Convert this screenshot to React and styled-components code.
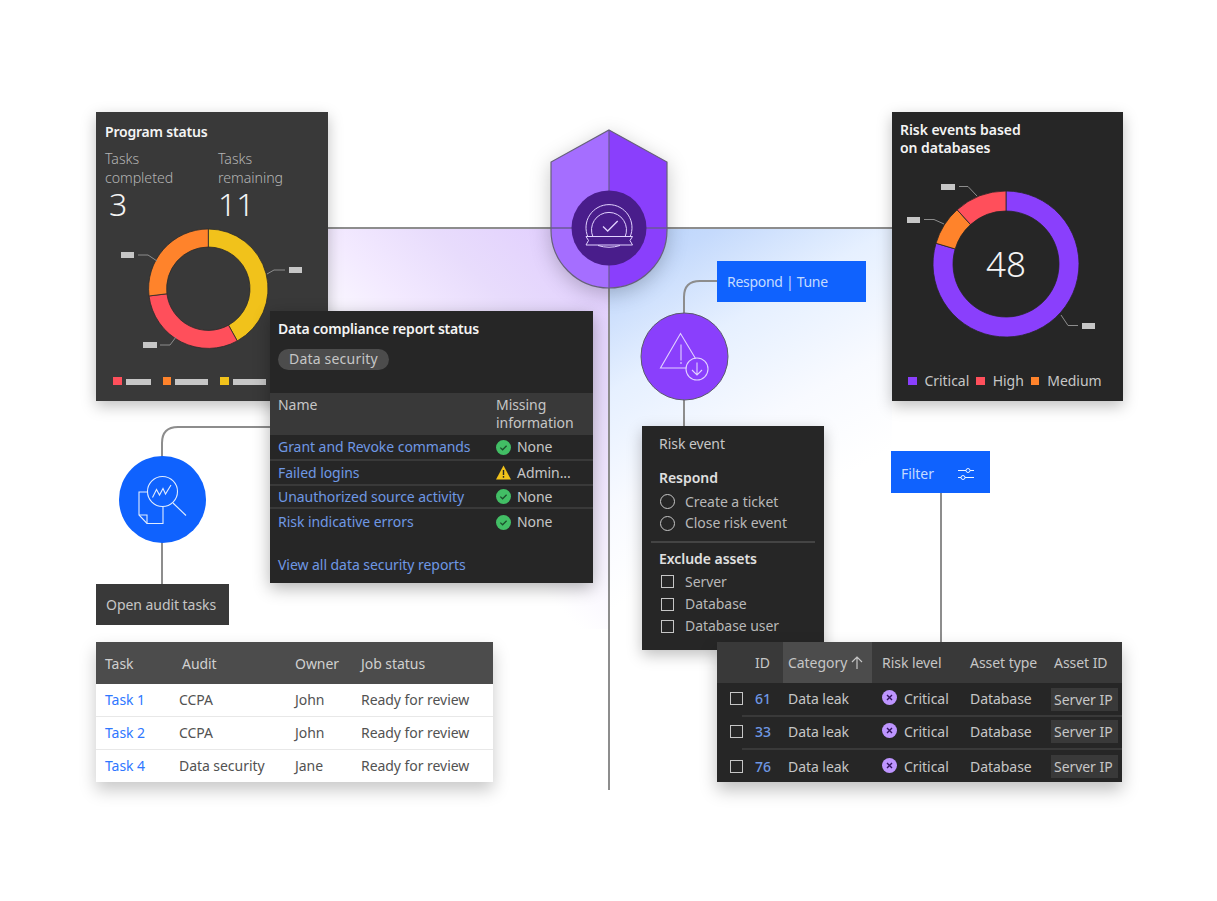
import React from 'react';
import styled, { createGlobalStyle } from 'styled-components';

const GlobalStyle = createGlobalStyle`
	html, body {
		margin: 0;
		padding: 0;
		background: #fff;
	}
	body {
		font-family: "Noto Sans", "Open Sans", sans-serif;
		font-size: 14px;
		line-height: 18px;
		letter-spacing: -0.05px;
		color: #c6c6c6;
	}
	* {
		box-sizing: border-box;
	}
`

const polar = (cx, cy, r, deg) => {
	const a = (deg - 90) * Math.PI / 180
	return [cx + r * Math.cos(a), cy + r * Math.sin(a)]
}

const arcPath = (cx, cy, r1, r2, from, to) => {
	const [ax, ay] = polar(cx, cy, r2, from)
	const [bx, by] = polar(cx, cy, r2, to)
	const [c, d] = polar(cx, cy, r1, to)
	const [e, f] = polar(cx, cy, r1, from)
	const big = to - from > 180 ? 1 : 0
	return `M${ax} ${ay}A${r2} ${r2} 0 ${big} 1 ${bx} ${by}L${c} ${d}A${r1} ${r1} 0 ${big} 0 ${e} ${f}Z`
}

const Donut = ({ cx, cy, r1, r2, segments, gap }) => (
	<g>
		{segments.map((s) => (
			<path key={s.from} d={arcPath(cx, cy, r1, r2, s.from, s.to)} fill={s.color} stroke={gap} strokeWidth="0.8" />
		))}
	</g>
)

const Callout = ({ x, y, w, line }) => (
	<g>
		<rect x={x} y={y} width={w} height="6" fill="#c6c6c6" />
		<path d={line} fill="none" stroke="#8d8d8d" strokeWidth="1" />
	</g>
)

const programSegments = [
	{ from: 0, to: 151, color: '#f1c21b' },
	{ from: 151, to: 263, color: '#ff4f5b' },
	{ from: 263, to: 360, color: '#ff832b' },
]

const riskSegments = [
	{ from: 0, to: 286.5, color: '#8a3ffc' },
	{ from: 286.5, to: 318, color: '#ff832b' },
	{ from: 318, to: 360, color: '#ff4f5b' },
]

const CheckIcon = () => (
	<svg width="15" height="15" viewBox="0 0 15 15">
		<circle cx="7.5" cy="7.5" r="7.5" fill="#42be65" />
		<path d="M4.3 7.6l2.3 2.2 4-4" fill="none" stroke="#1c4f2c" strokeWidth="1.3" />
	</svg>
)

const WarnIcon = () => (
	<svg width="15" height="15" viewBox="0 0 15 15">
		<path d="M7.5 .5L15 14.5H0Z" fill="#f1c21b" />
		<path d="M7.5 5v5M7.5 11v1.8" fill="none" stroke="#262626" strokeWidth="1.4" />
	</svg>
)

const CriticalIcon = () => (
	<svg width="15" height="15" viewBox="0 0 15 15">
		<circle cx="7.5" cy="7.5" r="7.5" fill="#be95ff" />
		<path d="M5 5l5 5M10 5l-5 5" fill="none" stroke="#31135e" strokeWidth="1.4" />
	</svg>
)

const SortArrow = () => (
	<svg width="12" height="13" viewBox="0 0 12 13">
		<path d="M6 13V1M1 6l5-5 5 5" fill="none" stroke="#c6c6c6" strokeWidth="1.2" />
	</svg>
)

const complianceRows = [
	{ name: 'Grant and Revoke commands', icon: <CheckIcon />, value: 'None', h: 26 },
	{ name: 'Failed logins', icon: <WarnIcon />, value: 'Admin...', h: 25 },
	{ name: 'Unauthorized source activity', icon: <CheckIcon />, value: 'None', h: 23 },
	{ name: 'Risk indicative errors', icon: <CheckIcon />, value: 'None', h: 26, last: true },
]

const tasks = [
	{ task: 'Task 1', audit: 'CCPA', owner: 'John' },
	{ task: 'Task 2', audit: 'CCPA', owner: 'John' },
	{ task: 'Task 4', audit: 'Data security', owner: 'Jane' },
]

const risks = [
	{ id: 61, top: 0, bottom: 1, sep: true },
	{ id: 33, top: 0, bottom: 2, sep: true },
	{ id: 76, top: 2, bottom: 0 },
]

const App = () => {
	return (
		<Canvas>
			<GlobalStyle />
			<PurpleGlow />
			<BlueGlow />

			<Wires viewBox="0 0 1217 901">
				<path d="M328 228H892M609 130V790" />
				<path d="M270 427H178Q162 427 162 443V584" />
				<path d="M717 281H700Q684 281 684 297V427" />
				<path d="M941 492V642" />
			</Wires>

			<Shield viewBox="550 129 118 161">
				<path d="M609 130L551 162V230A58 58 0 0 0 609 288Z" fill="#a56eff" />
				<path d="M609 130L667 162V230A58 58 0 0 1 609 288Z" fill="#8a3ffc" />
				<path d="M609 130V288M551 228H667" stroke="#6a5a96" strokeWidth="1.3" />
				<path d="M609 130L667 162V230A58 58 0 0 1 551 230V162Z" fill="none" stroke="#66607a" strokeWidth="1.2" />
				<circle cx="609" cy="228" r="37.5" fill="#491d8b" />
				<g fill="none" stroke="#e2d2ff" strokeWidth="1">
					<path d="M588 237A23 23 0 1 1 630 237" />
					<path d="M593 237A17.5 17.5 0 1 1 625 237" />
					<path d="M603 226.5l4.700 4.500 10-10" strokeWidth="1.3" />
					<path d="M586 236.500H632.500L630 240.500L632.500 245H586L588.500 240.500Z" />
					<path d="M598 245.500Q609 249 620 245.500" />
				</g>
			</Shield>

			<ProgramCard>
				<CardTitle $tight>Program status</CardTitle>
				<Stats>
					<Stat>
						<StatLabel>Tasks<br />completed</StatLabel>
						<StatValue $indent={4}>3</StatValue>
					</Stat>
					<Stat>
						<StatLabel>Tasks<br />remaining</StatLabel>
						<StatValue>11</StatValue>
					</Stat>
				</Stats>
				<ProgramChart viewBox="96 225 232 130">
					<Donut cx={208.3} cy={288.7} r1={41.7} r2={59.7} segments={programSegments} gap="#2b2b2b" />
					<Callout x={121} y={252} w={13} line="M138 255H148L157 261" />
					<Callout x={289} y={267} w={13} line="M285 270H274L267 274" />
					<Callout x={143} y={342} w={14} line="M160 345H170L176 337" />
				</ProgramChart>
				<ProgramLegend>
					<Swatch $color="#ff4f5b" />
					<LegendBar $width={25} />
					<Swatch $color="#ff832b" />
					<LegendBar $width={33} />
					<Swatch $color="#f1c21b" />
					<LegendBar $width={33} />
				</ProgramLegend>
			</ProgramCard>

			<ComplianceCard>
				<ComplianceHead>
					<CardTitle $tight>Data compliance report status</CardTitle>
					<Chip>Data security</Chip>
				</ComplianceHead>
				<ComplianceHeader>
					<span>Name</span>
					<span>Missing<br />information</span>
				</ComplianceHeader>
				{complianceRows.map((r) => (
					<ComplianceRow key={r.name} $h={r.h} $last={r.last}>
						<Link>{r.name}</Link>
						<StatusCell>{r.icon}{r.value}</StatusCell>
					</ComplianceRow>
				))}
				<ViewAll>View all data security reports</ViewAll>
			</ComplianceCard>

			<AuditNode>
				<svg width="87" height="87" viewBox="119 456 87 87">
					<circle cx="162.5" cy="499.5" r="43.5" fill="#0f62fe" />
					<g fill="none" stroke="#e0ecff" strokeWidth="1.1">
						<path d="M147 492H139V515L147 523.500H163V507" />
						<path d="M139 515H147V523.500" />
						<circle cx="162.500" cy="491.500" r="15" />
						<path d="M173 503L186 515.500" />
						<path d="M152.500 497.500L156.500 489.500L159.500 495L163 488.500L165.500 494L171 485" />
					</g>
				</svg>
			</AuditNode>

			<AuditTag>Open audit tasks</AuditTag>

			<TaskTable>
				<TaskHeader>
					<span>Task</span>
					<HeaderAudit>Audit</HeaderAudit>
					<span>Owner</span>
					<span>Job status</span>
				</TaskHeader>
				{tasks.map((t, i) => (
					<TaskRow key={t.task} $last={i === tasks.length - 1}>
						<TaskLink>{t.task}</TaskLink>
						<span>{t.audit}</span>
						<span>{t.owner}</span>
						<span>Ready for review</span>
					</TaskRow>
				))}
			</TaskTable>

			<RespondTag>Respond | Tune</RespondTag>

			<RiskNode>
				<svg width="89" height="89" viewBox="639.500 311.500 89 89">
					<circle cx="684" cy="356" r="43.500" fill="#8a3ffc" stroke="#5a5a6a" strokeWidth="1" />
					<g fill="none" stroke="#e2d2ff" strokeWidth="1.1">
						<path d="M686 367.500H660L680 333L695 358" />
						<path d="M680.500 344V360M680.500 361.500V363.500" />
						<circle cx="696.500" cy="368.500" r="11" />
						<path d="M696.500 362V374.500M691.500 369.500L696.500 374.500L701.500 369.500" />
					</g>
				</svg>
			</RiskNode>

			<RiskCard>
				<CardTitle>Risk events based<br />on databases</CardTitle>
				<RiskChart viewBox="892 180 231 165">
					<Donut cx={1006} cy={264} r1={53} r2={73} segments={riskSegments} gap="#262626" />
					<Callout x={941} y={184} w={14} line="M959 186.500H968L977 196" />
					<Callout x={907} y={217} w={13} line="M924 219.500H934L944 224" />
					<Callout x={1082} y={323} w={13} line="M1078 325.500H1068L1061 315" />
					<ChartNumber x="1006" y="277" textAnchor="middle">48</ChartNumber>
				</RiskChart>
				<RiskLegend>
					<LegendItem><Swatch $color="#8a3ffc" />Critical</LegendItem>
					<LegendItem><Swatch $color="#ff4f5b" />High</LegendItem>
					<LegendItem><Swatch $color="#ff832b" />Medium</LegendItem>
				</RiskLegend>
			</RiskCard>

			<FilterTag>
				Filter
				<svg width="16" height="14" viewBox="0 0 16 14">
					<g fill="none" stroke="#edf5ff" strokeWidth="1">
						<path d="M0 3.500H8M12 3.500H16M0 10.500H3M7 10.500H16" />
						<circle cx="10" cy="3.500" r="2" />
						<circle cx="5" cy="10.500" r="2" />
					</g>
				</svg>
			</FilterTag>

			<RiskPanel>
				<PanelLine>Risk event</PanelLine>
				<PanelHeading>Respond</PanelHeading>
				<OptionRow><Radio />Create a ticket</OptionRow>
				<OptionRow><Radio />Close risk event</OptionRow>
				<PanelDivider />
				<PanelSubheading>Exclude assets</PanelSubheading>
				<OptionRow $h={23}><Box />Server</OptionRow>
				<OptionRow $h={22}><Box />Database</OptionRow>
				<OptionRow $h={22}><Box />Database user</OptionRow>
			</RiskPanel>

			<RiskTable>
				<RiskHeader>
					<span />
					<HeadCell $pad={0}>ID</HeadCell>
					<SortedCell>Category <SortArrow /></SortedCell>
					<HeadCell>Risk level</HeadCell>
					<HeadCell $pad={5}>Asset type</HeadCell>
					<HeadCell $pad={4}>Asset ID</HeadCell>
				</RiskHeader>
				{risks.map((r) => (
					<RiskRow key={r.id} $top={r.top} $bottom={r.bottom} $sep={r.sep}>
						<CheckCell><Box /></CheckCell>
						<RiskId>{r.id}</RiskId>
						<BodyCell $pad={5}>Data leak</BodyCell>
						<CriticalCell><CriticalIcon />Critical</CriticalCell>
						<BodyCell $pad={5}>Database</BodyCell>
						<ServerChip>Server IP</ServerChip>
					</RiskRow>
				))}
			</RiskTable>
		</Canvas>
	)
}

export default App

const Canvas = styled.div`
	position: relative;
	width: 1217px;
	height: 901px;
	overflow: hidden;
	background: #fff;
`
const PurpleGlow = styled.div`
	position: absolute;
	left: 270px;
	top: 229px;
	width: 339px;
	height: 400px;
	background: linear-gradient(225deg, #dfcaff 0%, #e8dcfc 24%, #f3eaff 38%, #f9f6ff 48%, #fff 58%);
`
const BlueGlow = styled.div`
	position: absolute;
	left: 610px;
	top: 229px;
	width: 282px;
	height: 400px;
	background: linear-gradient(150deg, #b8d3fb 0%, #c5dafc 11%, #e6f0ff 29%, #f8faff 50%, #fff 68%);
`
const Wires = styled.svg`
	position: absolute;
	left: 0;
	top: 0;
	width: 1217px;
	height: 901px;
	path {
		fill: none;
		stroke: #8d8d8d;
		stroke-width: 2;
	}
`
const Shield = styled.svg`
	position: absolute;
	left: 550px;
	top: 129px;
	width: 118px;
	height: 161px;
	filter: drop-shadow(0 5px 10px rgba(0, 0, 0, 0.22));
`
const ProgramCard = styled.div`
	position: absolute;
	left: 96px;
	top: 112px;
	width: 232px;
	height: 289px;
	padding: 11px 9px 16px;
	display: flex;
	flex-direction: column;
	background: #393939;
	box-shadow: 0 5px 14px rgba(0, 0, 0, 0.25);
`
const CardTitle = styled.div`
	font-size: 14px;
	line-height: 18px;
	font-weight: 600;
	letter-spacing: ${props => props.$tight ? '-0.2px' : '-0.05px'};
	color: #f4f4f4;
`
const Stats = styled.div`
	display: grid;
	grid-template-columns: 113px 1fr;
	margin-top: 8px;
`
const Stat = styled.div`
	display: flex;
	flex-direction: column;
`
const StatLabel = styled.div`
	font-size: 14.200px;
	line-height: 19px;
	font-weight: 300;
	color: #b4b4b4;
`
const StatValue = styled.div`
	font-size: 32px;
	line-height: 34px;
	font-weight: 300;
	color: #f4f4f4;
	padding-left: ${props => props.$indent || 0}px;
`
const ProgramChart = styled.svg`
	display: block;
	width: 232px;
	height: 130px;
	margin: 4px -9px 0;
	flex: none;
`
const ProgramLegend = styled.div`
	margin-top: auto;
	margin-left: 8px;
	display: flex;
	align-items: center;
	height: 8px;
`
const Swatch = styled.span`
	display: block;
	flex: none;
	width: 8.500px;
	height: 8.500px;
	background: ${props => props.$color};
`
const LegendBar = styled.span`
	display: block;
	width: ${props => props.$width}px;
	height: 6px;
	margin: 2px 12px 0 4px;
	background: #c6c6c6;
`
const ComplianceCard = styled.div`
	position: absolute;
	left: 270px;
	top: 311px;
	width: 323px;
	height: 272px;
	display: flex;
	flex-direction: column;
	background: #262626;
	box-shadow: 0 5px 16px rgba(0, 0, 0, 0.3);
`
const ComplianceHead = styled.div`
	height: 82px;
	padding: 9px 8px 0;
`
const Chip = styled.div`
	display: inline-block;
	margin-top: 11px;
	height: 21px;
	padding: 0 11px;
	border-radius: 11px;
	line-height: 20px;
	font-size: 14px;
	letter-spacing: 0.2px;
	color: #c6c6c6;
	background: #4c4c4c;
`
const ComplianceHeader = styled.div`
	height: 42px;
	padding: 3px 8px 0;
	display: grid;
	grid-template-columns: 218px 1fr;
	background: #393939;
	color: #c6c6c6;
`
const ComplianceRow = styled.div`
	height: ${props => props.$h}px;
	padding: 0 8px;
	display: grid;
	grid-template-columns: 218px 1fr;
	align-items: center;
	border-bottom: ${props => props.$last ? 'none' : '2px solid #393939'};
`
const Link = styled.span`
	color: #6f98e4;
	white-space: nowrap;
`
const StatusCell = styled.span`
	display: flex;
	align-items: center;
	gap: 6px;
`
const ViewAll = styled.div`
	margin-top: 21px;
	padding-left: 8px;
	color: #6f98e4;
`
const AuditNode = styled.div`
	position: absolute;
	left: 119px;
	top: 456px;
	width: 87px;
	height: 87px;
	svg {
		display: block;
	}
`
const AuditTag = styled.div`
	position: absolute;
	left: 96px;
	top: 584px;
	width: 133px;
	height: 41px;
	padding-left: 10px;
	display: flex;
	align-items: center;
	background: #393939;
	color: #c6c6c6;
`
const TaskTable = styled.div`
	position: absolute;
	left: 96px;
	top: 642px;
	width: 397px;
	height: 140px;
	background: #fff;
	box-shadow: 0 8px 16px rgba(0, 0, 0, 0.22);
`
const TaskHeader = styled.div`
	height: 42px;
	padding: 2px 0 0 9px;
	display: grid;
	grid-template-columns: 74px 116px 66px 1fr;
	align-items: center;
	background: #4c4c4c;
	color: #d0d0d0;
`
const HeaderAudit = styled.span`
	padding-left: 3px;
`
const TaskRow = styled.div`
	height: ${props => props.$last ? 32 : 33}px;
	padding-left: 9px;
	display: grid;
	grid-template-columns: 74px 116px 66px 1fr;
	align-items: center;
	color: #525252;
	border-bottom: ${props => props.$last ? 'none' : '1.500px solid #e8e8e8'};
`
const TaskLink = styled.span`
	color: #2f77ff;
`
const RespondTag = styled.div`
	position: absolute;
	left: 717px;
	top: 261px;
	width: 149px;
	height: 41px;
	padding-left: 10px;
	display: flex;
	align-items: center;
	letter-spacing: -0.3px;
	background: #0f62fe;
	color: #c4dbff;
`
const RiskNode = styled.div`
	position: absolute;
	left: 639.500px;
	top: 311.500px;
	width: 89px;
	height: 89px;
	svg {
		display: block;
	}
`
const RiskCard = styled.div`
	position: absolute;
	left: 892px;
	top: 112px;
	width: 231px;
	height: 289px;
	padding: 9px 8px 11px;
	display: flex;
	flex-direction: column;
	background: #262626;
	box-shadow: 0 5px 14px rgba(0, 0, 0, 0.25);
`
const RiskChart = styled.svg`
	display: block;
	flex: none;
	width: 231px;
	height: 165px;
	margin: 23px -8px 0;
`
const ChartNumber = styled.text`
	font-size: 35px;
	font-weight: 300;
	fill: #f4f4f4;
`
const RiskLegend = styled.div`
	margin-top: auto;
	margin-left: 8px;
	display: flex;
	gap: 7px;
`
const LegendItem = styled.div`
	display: flex;
	align-items: center;
	gap: 8px;
	color: #c6c6c6;
`
const FilterTag = styled.div`
	position: absolute;
	left: 891px;
	top: 451px;
	width: 99px;
	height: 42px;
	padding: 3px 16px 0 10px;
	display: flex;
	align-items: center;
	justify-content: space-between;
	background: #0f62fe;
	color: #c4dbff;
`
const RiskPanel = styled.div`
	position: absolute;
	left: 642px;
	top: 426px;
	width: 182px;
	height: 224px;
	padding: 9px 17px 0;
	background: #262626;
	box-shadow: 0 5px 14px rgba(0, 0, 0, 0.25);
`
const PanelLine = styled.div`
	height: 18px;
	color: #c6c6c6;
`
const PanelHeading = styled.div`
	margin-top: 16px;
	height: 22px;
	font-weight: 600;
	color: #e0e0e0;
`
const PanelSubheading = styled(PanelHeading)`
	margin-top: 7px;
	height: 20px;
`
const OptionRow = styled.div`
	height: ${props => props.$h || 21.500}px;
	display: flex;
	align-items: center;
	gap: 10px;
	color: #b8b8b8;
`
const Radio = styled.span`
	flex: none;
	display: block;
	width: 15px;
	height: 15px;
	margin-left: 1px;
	border: 1.200px solid #c6c6c6;
	border-radius: 50%;
`
const Box = styled.span`
	flex: none;
	display: block;
	width: 13px;
	height: 13px;
	margin: 0 1px 0 2px;
	border: 1.200px solid #c6c6c6;
`
const PanelDivider = styled.div`
	height: 2px;
	margin: 7px -8px 0;
	background: #444;
`
const RiskTable = styled.div`
	position: absolute;
	left: 717px;
	top: 642px;
	width: 405px;
	height: 140px;
	background: #262626;
	box-shadow: 0 8px 16px rgba(0, 0, 0, 0.25);
`
const gridColumns = `
	display: grid;
	grid-template-columns: 38px 28px 89px 93px 85px 72px;
`
const RiskHeader = styled.div`
	${gridColumns}
	height: 41px;
	align-items: stretch;
	background: #393939;
	color: #c6c6c6;
`
const HeadCell = styled.span`
	display: flex;
	align-items: center;
	padding-left: ${props => props.$pad ?? 10}px;
	white-space: nowrap;
`
const SortedCell = styled(HeadCell)`
	padding-left: 5px;
	gap: 4px;
	background: #4c4c4c;
`
const RiskRow = styled.div`
	${gridColumns}
	position: relative;
	height: 33px;
	padding: ${props => props.$top}px 0 ${props => props.$bottom}px;
	align-items: center;
	&::after {
		content: '';
		display: ${props => props.$sep ? 'block' : 'none'};
		position: absolute;
		left: 25px;
		right: 0;
		bottom: -1px;
		height: 2px;
		background: #393939;
	}
`
const CheckCell = styled.span`
	padding-left: 11px;
	margin-top: -1px;
`
const RiskId = styled.span`
	color: #6f98e4;
	font-weight: 500;
`
const BodyCell = styled.span`
	padding-left: ${props => props.$pad}px;
	color: #c6c6c6;
	white-space: nowrap;
`
const CriticalCell = styled.span`
	display: flex;
	align-items: center;
	gap: 7px;
	padding-left: 10px;
	svg {
		margin-top: -3px;
	}
`
const ServerChip = styled.span`
	justify-self: start;
	height: 23px;
	line-height: 23px;
	padding: 0 3px;
	margin-left: 1px;
	width: 67px;
	white-space: nowrap;
	background: #393939;
`
